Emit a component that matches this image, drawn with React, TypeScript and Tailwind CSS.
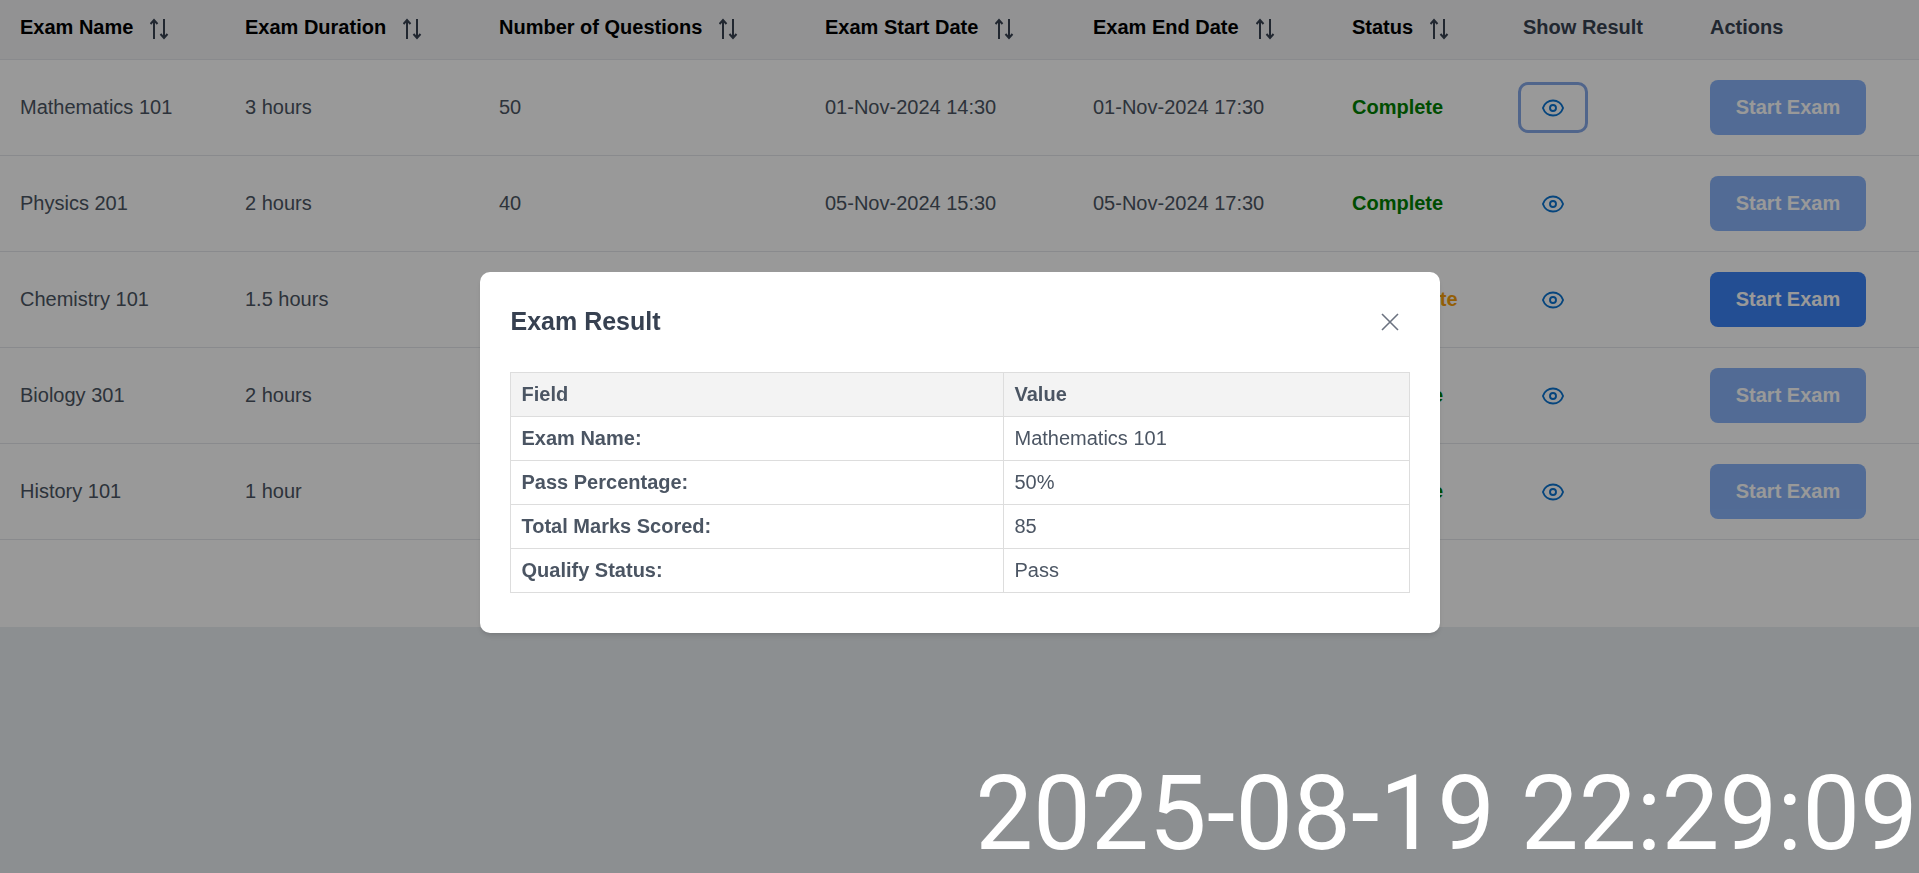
import React from 'react';
import { HiOutlineEye } from 'react-icons/hi2';

const EXAMS = [
  { name: 'Mathematics 101', duration: '3 hours', questions: 50, start: '01-Nov-2024 14:30', end: '01-Nov-2024 17:30', status: 'Complete' },
  { name: 'Physics 201', duration: '2 hours', questions: 40, start: '05-Nov-2024 15:30', end: '05-Nov-2024 17:30', status: 'Complete' },
  { name: 'Chemistry 101', duration: '1.5 hours', questions: 45, start: '10-Nov-2024 10:00', end: '10-Nov-2024 11:30', status: 'Incomplete' },
  { name: 'Biology 301', duration: '2 hours', questions: 60, start: '12-Nov-2024 09:00', end: '12-Nov-2024 11:00', status: 'Complete' },
  { name: 'History 101', duration: '1 hour', questions: 30, start: '15-Nov-2024 13:00', end: '15-Nov-2024 14:00', status: 'Complete' },
];

const RESULT = [
  ['Exam Name:', 'Mathematics 101'],
  ['Pass Percentage:', '50%'],
  ['Total Marks Scored:', '85'],
  ['Qualify Status:', 'Pass'],
];

function SortIcon() {
  return (
    <svg width="20" height="22" viewBox="0 0 20 22" fill="none" stroke="#374151" strokeWidth="2" className="mt-[4px] ml-[17px] shrink-0">
      <path d="M4 21V2M0.5 6L4 2l3.5 4" />
      <path d="M14 1v19M10.5 16l3.5 4 3.5-4" />
    </svg>
  );
}

function SortHeader({ label }: { label: string }) {
  return (
    <th className="px-5 pb-[5px] text-left font-bold text-black">
      <div className="flex items-center">
        {label}
        <SortIcon />
      </div>
    </th>
  );
}

export default function App() {
  return (
    <div className="min-h-[873px] bg-[#e9eef2] font-['Liberation_Sans',Arial,sans-serif] text-[20px]">
      <div className="h-[627px] bg-white">
        <table className="w-full table-fixed border-collapse">
          <colgroup>
            <col className="w-[225px]" />
            <col className="w-[254px]" />
            <col className="w-[326px]" />
            <col className="w-[268px]" />
            <col className="w-[259px]" />
            <col className="w-[171px]" />
            <col className="w-[187px]" />
            <col />
          </colgroup>
          <thead>
            <tr className="h-[59px] border-b border-[#e5e7eb] bg-[#f3f4f6]">
              <SortHeader label="Exam Name" />
              <SortHeader label="Exam Duration" />
              <SortHeader label="Number of Questions" />
              <SortHeader label="Exam Start Date" />
              <SortHeader label="Exam End Date" />
              <SortHeader label="Status" />
              <th className="px-5 pb-[5px] text-left font-bold text-[#374151]">Show Result</th>
              <th className="px-5 pb-[5px] text-left font-bold text-[#374151]">Actions</th>
            </tr>
          </thead>
          <tbody className="text-[#4b5563]">
            {EXAMS.map((exam, i) => (
              <tr key={exam.name} className="h-[96px] border-b border-[#e5e7eb]">
                <td className="px-5 pb-[1px]">{exam.name}</td>
                <td className="px-5 pb-[1px]">{exam.duration}</td>
                <td className="px-5 pb-[1px]">{exam.questions}</td>
                <td className="px-5 pb-[1px]">{exam.start}</td>
                <td className="px-5 pb-[1px]">{exam.end}</td>
                <td className={`px-5 pb-[1px] font-bold ${exam.status === 'Complete' ? 'text-[#008000]' : 'text-[#f59e0b]'}`}>
                  {exam.status}
                </td>
                <td className="px-0">
                  <button
                    type="button"
                    className={`ml-[15px] flex h-[51px] w-[70px] items-center justify-center rounded-[10px] border-[3px] pt-[2px] text-[#0b74d1] ${
                      i === 0 ? 'border-[#86a8e8]' : 'border-transparent'
                    }`}
                  >
                    <HiOutlineEye size={24} strokeWidth={1.9} />
                  </button>
                </td>
                <td className="px-5">
                  <button
                    type="button"
                    className={`h-[55px] w-[156px] rounded-[8px] bg-[#3b82f6] pb-[1px] font-bold text-white ${
                      exam.status === 'Complete' ? 'opacity-60' : ''
                    }`}
                  >
                    Start Exam
                  </button>
                </td>
              </tr>
            ))}
          </tbody>
        </table>
      </div>

      {/* modal backdrop */}
      <div className="fixed inset-0 flex items-start justify-center bg-black/40 pt-[272px]">
        <div className="h-[361px] w-[960px] rounded-[10px] bg-white px-[30px] shadow-md">
          <div className="flex h-[100px] items-center justify-between">
            <h2 className="pb-[2px] pl-[1px] text-[25px] leading-none font-bold text-[#374151]">Exam Result</h2>
            <svg width="18" height="18" viewBox="0 0 18 18" fill="none" stroke="#6b7280" strokeWidth="1.6" className="mr-[11px]">
              <path d="M1 1l16 16M17 1L1 17" />
            </svg>
          </div>
          <table className="w-[900px] table-fixed border-collapse text-[#4b5563]">
            <colgroup>
              <col className="w-[493px]" />
              <col />
            </colgroup>
            <thead>
              <tr className="h-[44px] bg-[#f3f3f3]">
                <th className="border border-[#ddd] px-[11px] pb-[1px] text-left font-bold">Field</th>
                <th className="border border-[#ddd] px-[11px] pb-[1px] text-left font-bold">Value</th>
              </tr>
            </thead>
            <tbody>
              {RESULT.map(([field, value]) => (
                <tr key={field} className="h-[44px]">
                  <td className="border border-[#ddd] px-[11px] pb-[1px] font-bold">{field}</td>
                  <td className="border border-[#ddd] px-[11px] pb-[1px]">{value}</td>
                </tr>
              ))}
            </tbody>
          </table>
        </div>
      </div>

      {/* timestamp stamped over the page */}
      <div className="fixed right-[1px] bottom-[8px] font-['Roboto',sans-serif] text-[103px] leading-none text-white">
        2025-08-19 22:29:09
      </div>
    </div>
  );
}
